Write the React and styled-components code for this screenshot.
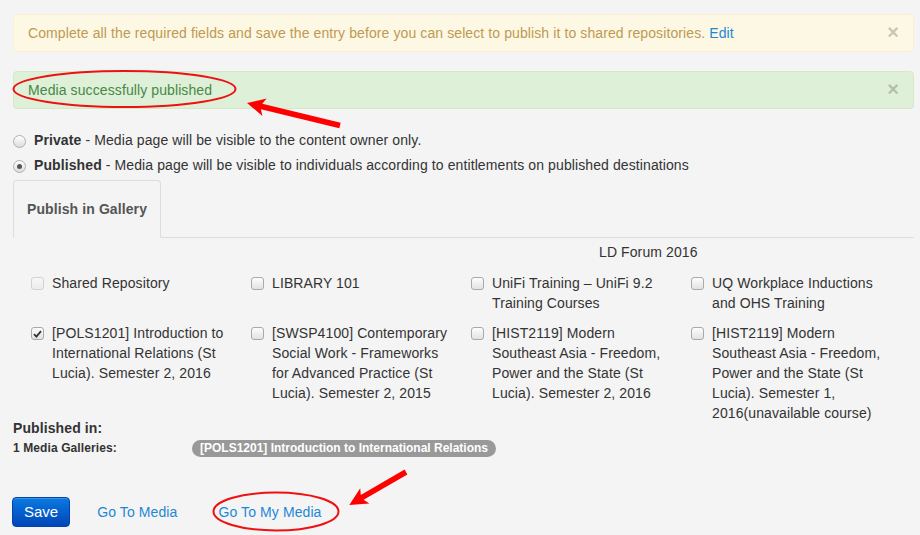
import React from "react";
import styled, { createGlobalStyle } from "styled-components";

const GlobalStyle = createGlobalStyle`
    html, body {
        margin: 0;
        padding: 0;
        background: #f4f4f4;
    }
    body {
        font-family: "Liberation Sans", Arial, sans-serif;
        font-size: 14px;
        line-height: 20px;
        letter-spacing: 0.1px;
        color: #333;
    }
`;

const Page = styled.div`
    position: relative;
    width: 920px;
    height: 535px;
    box-sizing: border-box;
    padding: 14px 6px 0 13px;
    overflow: hidden;
`;

const Alert = styled.div`
    display: flex;
    align-items: center;
    justify-content: space-between;
    padding: 8px 14px 8px 14px;
    border: 1px solid ${(p) => (p.$kind === "success" ? "#d6e9c6" : "#fbeed5")};
    border-radius: 4px;
    background: ${(p) => (p.$kind === "success" ? "#dff0d8" : "#fcf8e3")};
    color: ${(p) => (p.$kind === "success" ? "#468847" : "#c09853")};
    margin-bottom: 19px;
    line-height: 20px;

    a {
        color: #1f87d6;
        text-decoration: none;
    }
`;

const Close = styled.span`
    font-size: 20px;
    font-weight: bold;
    line-height: 20px;
    color: #000;
    opacity: 0.2;
    cursor: pointer;
    margin-top: -3px;
`;

const RadioGroup = styled.div`
    padding-top: 2px;
`;

const RadioRow = styled.label`
    display: flex;
    align-items: center;
    margin-bottom: 5px;

    b {
        margin-right: 4px;
    }
`;

const Radio = styled.span`
    position: relative;
    width: 11px;
    height: 11px;
    border-radius: 50%;
    border: 1px solid #b0b0b0;
    background: linear-gradient(#ffffff, #dcdcdc);
    margin-right: 8px;
    margin-top: 2px;
    flex-shrink: 0;

    &::after {
        content: "";
        display: ${(p) => (p.$checked ? "block" : "none")};
        position: absolute;
        left: 3px;
        top: 3px;
        width: 5px;
        height: 5px;
        border-radius: 50%;
        background: #555;
    }
`;

const TabNav = styled.div`
    display: flex;
    border-bottom: 1px solid #ddd;
`;

const Tab = styled.div`
    padding: 18px 13px 18px 13px;
    border: 1px solid #ddd;
    border-bottom-color: transparent;
    border-radius: 4px 4px 0 0;
    background: #f4f4f4;
    margin-bottom: -1px;
    font-weight: bold;
    color: #555;
`;

const GroupTitle = styled.div`
    margin-top: 4px;
    padding-left: 586px;
`;

const GalleryGrid = styled.div`
    display: grid;
    grid-template-columns: repeat(4, 220px);
    row-gap: 10px;
    margin-top: 11px;
    padding-left: 18px;
`;

const GalleryItem = styled.label`
    display: flex;
    align-items: flex-start;
    gap: 8px;
`;

const Checkbox = styled.span`
    display: flex;
    align-items: center;
    justify-content: center;
    width: 11px;
    height: 11px;
    margin-top: 4px;
    flex-shrink: 0;
    border: 1px solid ${(p) => (p.$disabled ? "#d2d2d2" : "#a9a9a9")};
    border-radius: 3px;
    background: ${(p) =>
        p.$disabled ? "linear-gradient(#f7f7f7, #ececec)" : "linear-gradient(#fdfdfd, #e2e2e2)"};
`;

const ItemText = styled.span`
    width: 186px;
`;

const PublishedBlock = styled.div`
    margin-top: -5px;
`;

const PublishedTitle = styled.div`
    font-weight: bold;
    color: #333;
`;

const GalleriesRow = styled.div`
    display: flex;
    align-items: center;
    font-size: 12px;
    font-weight: bold;
`;

const GalleriesLabel = styled.span`
    width: 179px;
`;

const Badge = styled.span`
    display: inline-block;
    height: 17px;
    line-height: 17px;
    padding: 0 8px;
    border-radius: 9px;
    background: #999;
    color: #fff;
    font-size: 12px;
    font-weight: bold;
    letter-spacing: 0;
`;

const Actions = styled.div`
    display: flex;
    align-items: center;
    gap: 27px;
    margin-top: 39px;
    margin-left: -1px;
`;

const SaveButton = styled.button`
    font-family: "Liberation Sans", Arial, sans-serif;
    font-size: 15px;
    line-height: 20px;
    color: #fff;
    padding: 4px 11px;
    height: 30px;
    border: 1px solid #0044aa;
    border-radius: 4px;
    background: linear-gradient(#0a7ae0, #0045b8);
    box-shadow: inset 0 1px 0 rgba(255, 255, 255, 0.2);
    cursor: pointer;
`;

const LinkButton = styled.a`
    color: #1f87d6;
    text-decoration: none;
    padding-right: 14px;
`;

const Annotations = styled.svg`
    position: absolute;
    left: 0;
    top: 0;
    pointer-events: none;
`;

const galleries = [
    { id: 1, text: "Shared Repository", disabled: true },
    { id: 2, text: "LIBRARY 101" },
    { id: 3, text: "UniFi Training \u2013 UniFi 9.2 Training Courses" },
    { id: 4, text: "UQ Workplace Inductions and OHS Training" },
    { id: 5, text: "[POLS1201] Introduction to International Relations (St Lucia). Semester 2, 2016", checked: true },
    { id: 6, text: "[SWSP4100] Contemporary Social Work - Frameworks for Advanced Practice (St Lucia). Semester 2, 2015" },
    { id: 7, text: "[HIST2119] Modern Southeast Asia - Freedom, Power and the State (St Lucia). Semester 2, 2016" },
    { id: 8, text: "[HIST2119] Modern Southeast Asia - Freedom, Power and the State (St Lucia). Semester 1, 2016(unavailable course)" },
];

function Check() {
    return (
        <svg width="9" height="8" viewBox="0 0 9 8">
            <path d="M1 4.2 L3.4 6.6 L8 1.2" fill="none" stroke="#333" strokeWidth="1.8" />
        </svg>
    );
}

export default function App() {
    return (
        <Page>
            <GlobalStyle />

            <Alert>
                <span>
                    Complete all the required fields and save the entry before you can select to publish it to shared
                    repositories. <a href="#">Edit</a>
                </span>
                <Close>×</Close>
            </Alert>

            <Alert $kind="success">
                <span>Media successfully published</span>
                <Close>×</Close>
            </Alert>

            <RadioGroup>
                <RadioRow>
                    <Radio />
                    <b>Private</b> - Media page will be visible to the content owner only.
                </RadioRow>
                <RadioRow>
                    <Radio $checked />
                    <b>Published</b> - Media page will be visible to individuals according to entitlements on published
                    destinations
                </RadioRow>
            </RadioGroup>

            <TabNav>
                <Tab>Publish in Gallery</Tab>
            </TabNav>

            <GroupTitle>LD Forum 2016</GroupTitle>

            <GalleryGrid>
                {galleries.map((g) => (
                    <GalleryItem key={g.id}>
                        <Checkbox $disabled={g.disabled}>{g.checked && <Check />}</Checkbox>
                        <ItemText>{g.text}</ItemText>
                    </GalleryItem>
                ))}
            </GalleryGrid>

            <PublishedBlock>
                <PublishedTitle>Published in:</PublishedTitle>
                <GalleriesRow>
                    <GalleriesLabel>1 Media Galleries:</GalleriesLabel>
                    <Badge>[POLS1201] Introduction to International Relations</Badge>
                </GalleriesRow>
            </PublishedBlock>

            <Actions>
                <SaveButton>Save</SaveButton>
                <LinkButton href="#">Go To Media</LinkButton>
                <LinkButton href="#">Go To My Media</LinkButton>
            </Actions>

            {/* red markup drawn on top of the screenshot */}
            <Annotations width="920" height="535" viewBox="0 0 920 535">
                <ellipse cx="124.5" cy="89" rx="111" ry="18" fill="none" stroke="#ee1111" strokeWidth="2" />
                <ellipse cx="276" cy="511.5" rx="62.5" ry="19" fill="none" stroke="#ee1111" strokeWidth="2" />
                <polygon
                    fill="#ff0000"
                    points="247,103 266.6,98.5 262.3,103.8 340.7,122.8 339.3,128.2 260.9,109.2 262.4,115.9"
                />
                <polygon
                    fill="#ff0000"
                    points="349.3,505 360.2,488.2 360.8,495 404.6,469.6 407.4,474.4 363.6,499.8 369.4,503.6"
                />
            </Annotations>
        </Page>
    );
}
